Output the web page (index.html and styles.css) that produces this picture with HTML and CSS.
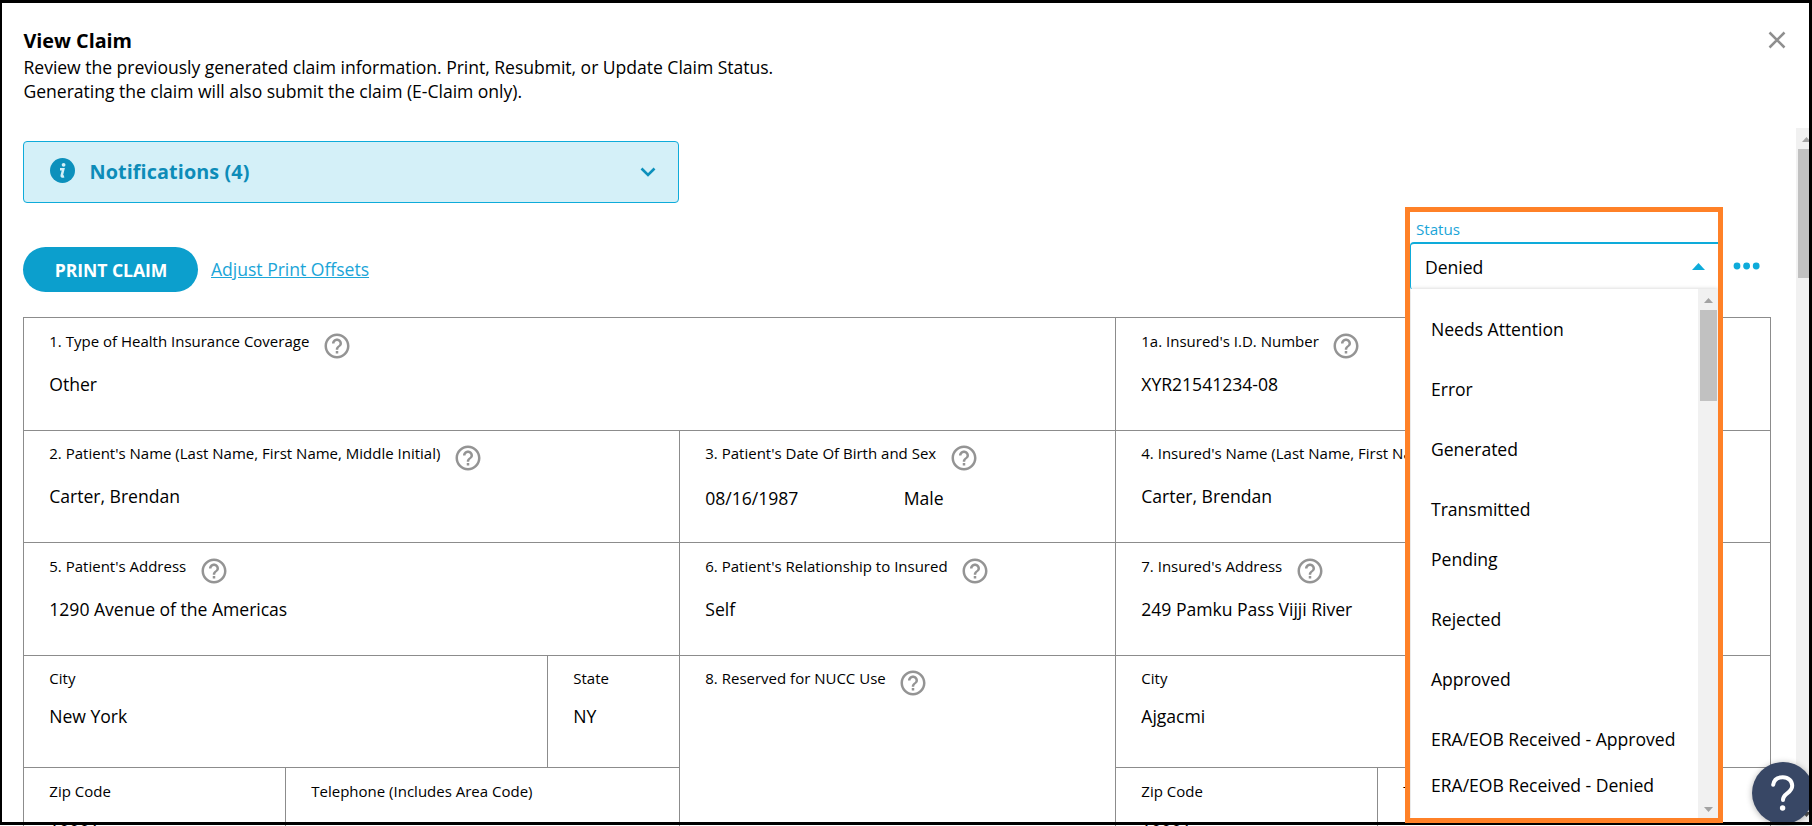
FILE: index.html
```html
<!DOCTYPE html>
<html lang="en">
<head>
<meta charset="utf-8">
<title>View Claim</title>
<link rel="stylesheet" href="styles.css">
</head>
<body>
<svg class="defs" width="0" height="0">
  <symbol id="help" viewBox="0 0 24 24"><path fill="currentColor" d="M11 18h2v-2h-2v2zm1-16C6.480 2 2 6.480 2 12s4.480 10 10 10 10-4.480 10-10S17.520 2 12 2zm0 18c-4.410 0-8-3.590-8-8s3.590-8 8-8 8 3.590 8 8-3.590 8-8 8zm0-14c-2.210 0-4 1.790-4 4h2c0-1.100.9-2 2-2s2 .9 2 2c0 2-3 1.750-3 5h2c0-2.250 3-2.500 3-5 0-2.210-1.790-4-4-4z"/></symbol>
</svg>
<div class="window">
  <header class="header">
    <div>
      <h1 class="title">View Claim</h1>
      <p class="intro">Review the previously generated claim information. Print, Resubmit, or Update Claim Status.<br>Generating the claim will also submit the claim (E-Claim only).</p>
    </div>
    <svg class="close" viewBox="0 0 18 18"><path d="M1.500 1.500l15 15M16.500 1.500l-15 15"/></svg>
  </header>
  <div class="body">
    <main class="content">
      <section class="notice">
        <svg class="info" viewBox="0 0 25 25"><circle cx="12.500" cy="12.500" r="12.500"/><circle class="mark" cx="13.600" cy="6.800" r="1.900"/><path class="stroke" d="M10 11.200h3.300l-1.600 6.400q-.3 1.500 2.300.6"/></svg>
        <span class="notice-text">Notifications (4)</span>
        <svg class="chevron" viewBox="0 0 16 10"><path d="M1.500 1.500L8 8l6.500-6.500"/></svg>
      </section>
      <div class="toolbar">
        <button class="print">PRINT CLAIM</button>
        <a class="link">Adjust Print Offsets</a>
        <svg class="more" viewBox="0 0 28 8"><circle cx="4" cy="4" r="3.400"/><circle cx="13.600" cy="4" r="3.400"/><circle cx="23.200" cy="4" r="3.400"/></svg>
      </div>
      <section class="form">
        <div class="cell c4"><div class="label">1. Type of Health Insurance Coverage<svg class="help"><use href="#help"/></svg></div><div class="value">Other</div></div>
        <div class="cell c2"><div class="label">1a. Insured's I.D. Number<svg class="help"><use href="#help"/></svg></div><div class="value">XYR21541234-08</div></div>

        <div class="cell c3 raised"><div class="label">2. Patient's Name (Last Name, First Name, Middle Initial)<svg class="help"><use href="#help"/></svg></div><div class="value">Carter, Brendan</div></div>
        <div class="cell raised"><div class="label">3. Patient's Date Of Birth and Sex<svg class="help"><use href="#help"/></svg></div><div class="value pair"><span>08/16/1987</span><span>Male</span></div></div>
        <div class="cell c2 raised"><div class="label">4. Insured's Name (Last Name, First Name, Middle Initial)</div><div class="value">Carter, Brendan</div></div>

        <div class="cell c3"><div class="label">5. Patient's Address<svg class="help"><use href="#help"/></svg></div><div class="value">1290 Avenue of the Americas</div></div>
        <div class="cell"><div class="label">6. Patient's Relationship to Insured<svg class="help"><use href="#help"/></svg></div><div class="value">Self</div></div>
        <div class="cell c2"><div class="label">7. Insured's Address<svg class="help"><use href="#help"/></svg></div><div class="value">249 Pamku Pass Vijji River</div></div>

        <div class="cell c2 raised"><div class="label">City</div><div class="value short">New York</div></div>
        <div class="cell raised"><div class="label">State</div><div class="value short">NY</div></div>
        <div class="cell tall raised"><div class="label">8. Reserved for NUCC Use<svg class="help"><use href="#help"/></svg></div></div>
        <div class="cell c2 raised"><div class="label">City</div><div class="value short">Ajgacmi</div></div>

        <div class="cell"><div class="label">Zip Code</div><div class="value short last">10001</div></div>
        <div class="cell c2"><div class="label">Telephone (Includes Area Code)</div></div>
        <div class="cell"><div class="label">Zip Code</div><div class="value short last">10001</div></div>
        <div class="cell"><div class="label">Telephone</div></div>
      </section>
    </main>
    <div class="scroll page-scroll">
      <svg class="arrow" viewBox="0 0 9 5"><path d="M0 5L4.500 0 9 5z"/></svg>
      <div class="thumb"></div>
      <svg class="arrow dark" viewBox="0 0 9 5"><path d="M0 0L4.500 5 9 0z"/></svg>
    </div>
  </div>

  <section class="status">
    <div class="status-label">Status</div>
    <div class="select"><span>Denied</span><svg class="caret" viewBox="0 0 13 7"><path d="M0 7L6.500 0 13 7z"/></svg></div>
    <div class="menu">
      <ul class="options">
        <li>Needs Attention</li>
        <li>Error</li>
        <li>Generated</li>
        <li class="tight">Transmitted</li>
        <li>Pending</li>
        <li>Rejected</li>
        <li>Approved</li>
        <li class="tighter">ERA/EOB Received - Approved</li>
        <li>ERA/EOB Received - Denied</li>
      </ul>
      <div class="scroll menu-scroll">
        <svg class="arrow" viewBox="0 0 9 5"><path d="M0 5L4.500 0 9 5z"/></svg>
        <div class="thumb"></div>
        <svg class="arrow" viewBox="0 0 9 5"><path d="M0 0L4.500 5 9 0z"/></svg>
      </div>
    </div>
  </section>

  <div class="bubble"><svg viewBox="0 0 24 36"><path d="M2.200 9.800C3 4.500 7 2.200 11.800 2.200c5.700 0 9.400 3.800 9.400 8.600 0 7.600-9.200 7-9.200 14.200"/><circle cx="11.600" cy="33" r="2.700"/></svg></div>
  <div class="frame"></div>
</div>
</body>
</html>
```
FILE: styles.css
```css
* { box-sizing: border-box; }
body { margin: 0; background: #fff; color: #000; font: 17.6px/24px "Open Sans", "Noto Sans", sans-serif; letter-spacing: -.03px; }
svg { display: block; flex: none; }
.defs { position: absolute; }
.window { position: relative; width: 1812px; height: 826px; overflow: hidden; display: flex; flex-direction: column; }
.frame { position: absolute; top: 0; left: 0; width: 1812px; height: 825px; border: 3px solid #000; border-left-width: 2px; }

.header { height: 128px; flex: none; display: flex; justify-content: space-between; padding: 28px 26px 0 23.500px; }
.title { margin: 0; font-size: 19.800px; font-weight: 700; line-height: 25px; letter-spacing: -.02px; }
.intro { margin: 1.500px 0 0; line-height: 24.200px; letter-spacing: -.045px; }
.close { width: 18px; height: 18px; margin-top: 3px; fill: none; stroke: #8f8f8f; stroke-width: 2.500; }

.body { flex: 1; display: flex; min-height: 0; }
.content { width: 1796px; flex: none; padding: 13px 25px 0 23px; }
.notice { width: 656px; height: 62px; border: 1px solid #0eabda; border-radius: 4px; background: #d4f0f8; display: flex; align-items: center; padding: 0 22px 0 26px; color: #0d8cb8; }
.info { width: 25px; height: 25px; margin-top: -3px; fill: #0c90bc; }
.info .mark { fill: #d4f0f8; }
.info .stroke { fill: none; stroke: #d4f0f8; stroke-width: 2.500; }
.notice-text { flex: 1; margin-left: 14.500px; font-size: 19.800px; font-weight: 700; letter-spacing: .1px; }
.chevron { width: 16px; height: 10px; fill: none; stroke: #0c90bc; stroke-width: 2.600; }

.toolbar { height: 45px; margin-top: 44px; display: flex; align-items: center; }
.print { width: 175px; height: 45px; padding: 0 0 0 1px; border: 0; border-radius: 23px; background: #0c9fcd; color: #fff; font: 700 17.600px/24px "Open Sans", sans-serif; letter-spacing: -.05px; }
.link { margin: -1px 0 0 13px; color: #1ba5d8; text-decoration: underline; }
.more { width: 28px; height: 8px; margin: -8px 10.500px 0 auto; fill: #0eabda; }

.form { height: 520px; margin-top: 25px; width: 1748px; display: grid; grid-template-columns: 262px 262px 132px 436px 262px 393px; grid-template-rows: 113px 112px 113px 112px 113px; border-top: 1px solid #8c8c8c; border-left: 1px solid #8c8c8c; }
.cell { border-right: 1px solid #8c8c8c; border-bottom: 1px solid #8c8c8c; padding: 12px 0 0 25.300px; overflow: hidden; white-space: nowrap; }
.raised { padding-top: 11px; }
.c2 { grid-column: span 2; }
.c3 { grid-column: span 3; }
.c4 { grid-column: span 4; }
.tall { grid-row: span 2; }
.label { height: 24px; display: flex; font-size: 15px; line-height: 22px; letter-spacing: 0; }
.help { width: 30px; height: 30px; margin: 1px 0 0 12.500px; color: #949494; }
.value { margin-top: 18px; }
.value.short { margin-top: 13px; }
.value.short.last { margin-top: 15px; }
.pair { display: flex; padding-top: 2px; }
.pair span:first-child { width: 198.500px; }

.scroll { background: #f1f1f1; display: flex; flex-direction: column; align-items: center; }
.arrow { width: 9px; height: 5px; fill: #a3a3a3; }
.arrow:last-child { margin-top: auto; }
.arrow.dark { fill: #505050; }
.thumb { width: 17px; background: #c1c1c1; }
.page-scroll { width: 21px; flex: none; height: 694px; padding: 9px 0 5px; }
.page-scroll .thumb { margin-top: 7px; height: 129px; }

.status { position: absolute; left: 1405px; top: 207px; width: 318px; height: 616px; border: 5px solid #ff8127; background: #fff; overflow: hidden; z-index: 1; }
.status-label { height: 30px; padding: 6px 0 0 6px; font-size: 15.200px; line-height: 22px; color: #1ba5d8; }
.select { height: 48px; width: 320px; border: 2px solid #0eabda; border-left-width: 1.500px; border-bottom: 0; border-radius: 4px 0 0 4px; display: flex; justify-content: space-between; align-items: center; padding: 0 23.500px 0 14px; }
.caret { width: 13px; height: 7px; margin-top: -1px; fill: #0eabda; }
.menu { height: 529px; margin: -1px 0 0 1px; display: flex; background: #fff; box-shadow: 0 0 4px rgba(0,0,0,.2); position: relative; }
.options { flex: 1; margin: 0; padding: 28px 0 0 20px; list-style: none; white-space: nowrap; }
.options li { height: 60px; }
.options .tight { height: 50px; }
.options .tighter { height: 46px; }
.menu-scroll { width: 20px; padding: 9px 0 6px; }
.menu-scroll .thumb { margin-top: 7px; height: 91px; }

.bubble { position: absolute; left: 1752px; top: 762px; width: 62px; height: 62px; border-radius: 50%; background: #384765; box-shadow: 0 1px 6px rgba(0,0,0,.3); display: flex; justify-content: center; padding-top: 13px; }
.bubble svg { width: 24px; height: 36px; fill: none; stroke: #fff; stroke-width: 4; stroke-linecap: round; }
.bubble circle { fill: #fff; stroke: none; }
.frame { z-index: 0; }
```
